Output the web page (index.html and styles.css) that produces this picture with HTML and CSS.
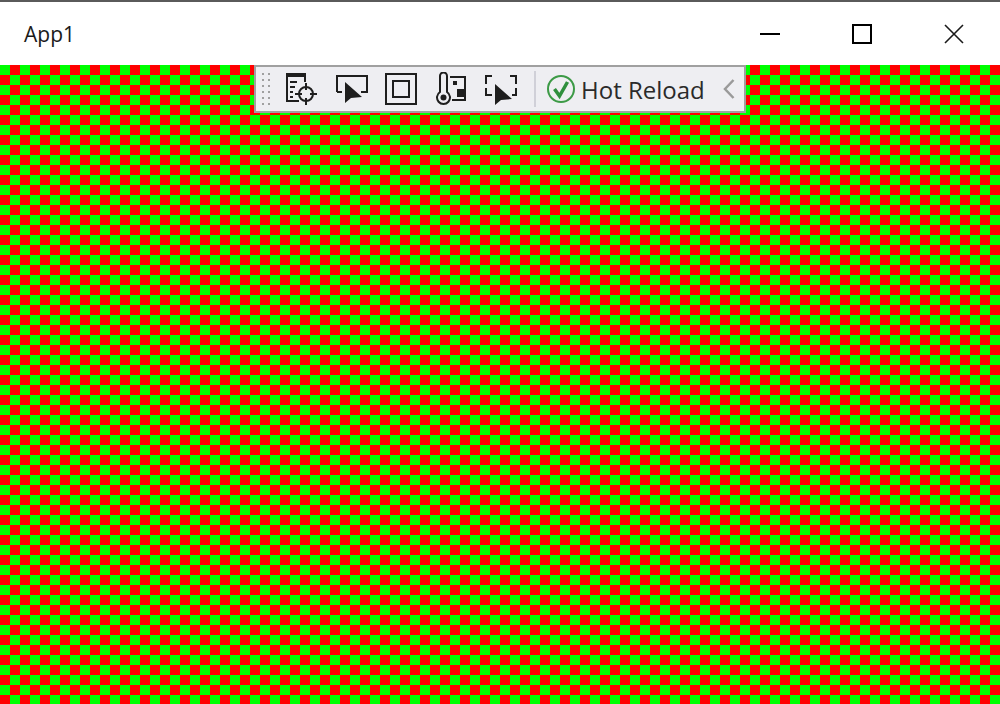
FILE: index.html
```html
<!DOCTYPE html>
<html lang="en">
<head>
<meta charset="utf-8">
<title>App1</title>
<link rel="stylesheet" href="styles.css">
</head>
<body>
<div class="window">
  <header class="titlebar">
    <div class="app-title">App1</div>
    <div class="caption">
      <div class="caption-btn"><svg width="20" height="20" viewBox="0 0 20 20"><rect x="0" y="9" width="20" height="2" fill="#000"/></svg></div>
      <div class="caption-btn"><svg width="20" height="20" viewBox="0 0 20 20"><rect x="1" y="1" width="18" height="18" fill="none" stroke="#000" stroke-width="2"/></svg></div>
      <div class="caption-btn"><svg width="20" height="20" viewBox="0 0 20 20"><path d="M1 1L19 19M19 1L1 19" fill="none" stroke="#1a1a1a" stroke-width="1.6"/></svg></div>
    </div>
  </header>
  <main class="canvas">
    <div class="toolbar">
      <div class="grip"></div>
      <div class="tool">
        <svg width="34" height="34" viewBox="0 0 34 34">
          <path d="M2 1h20v4H2z" fill="#1e1e1e"/>
          <path d="M3 5v24h12M21 5v5" fill="none" stroke="#1e1e1e" stroke-width="2"/>
          <path d="M6 10h7M6 15h5M6 20h3M6 25h3" stroke="#1e1e1e" stroke-width="2" fill="none"/>
          <circle cx="22" cy="22" r="7" fill="none" stroke="#1e1e1e" stroke-width="2"/>
          <path d="M22 11v7M22 26v7M11 22h7M26 22h7" stroke="#1e1e1e" stroke-width="2" fill="none"/>
        </svg>
      </div>
      <div class="tool">
        <svg width="34" height="34" viewBox="0 0 34 34">
          <path d="M3 20V4h30v16h-6M3 20h5" fill="none" stroke="#1e1e1e" stroke-width="2"/>
          <path d="M11 10v21l6-5 11-1z" fill="#1e1e1e"/>
        </svg>
      </div>
      <div class="tool">
        <svg width="34" height="34" viewBox="0 0 34 34">
          <rect x="2" y="2" width="30" height="30" fill="none" stroke="#1e1e1e" stroke-width="2"/>
          <rect x="9" y="9" width="16" height="16" fill="none" stroke="#1e1e1e" stroke-width="2"/>
        </svg>
      </div>
      <div class="tool">
        <svg width="34" height="34" viewBox="0 0 34 34">
          <path d="M6 20V4a3.500 3.500 0 0 1 7 0v16a6.500 6.500 0 1 1-7 0z" fill="none" stroke="#1e1e1e" stroke-width="2"/>
          <circle cx="9.500" cy="25.500" r="3" fill="#1e1e1e"/>
          <path d="M16 5h15v23H18" fill="none" stroke="#1e1e1e" stroke-width="2"/>
          <rect x="19" y="9" width="4" height="4" fill="#1e1e1e"/>
          <rect x="23" y="17" width="8" height="8" fill="#1e1e1e"/>
        </svg>
      </div>
      <div class="tool">
        <svg width="34" height="34" viewBox="0 0 34 34">
          <path d="M8 4H2v8M26 4h6v8M2 16v7h6M32 16v7h-4M8 2v0" fill="none" stroke="#1e1e1e" stroke-width="2"/>
          <path d="M11 12v21l6-5 11-1z" fill="#1e1e1e"/>
        </svg>
      </div>
      <div class="separator"></div>
      <div class="status">
        <svg width="30" height="30" viewBox="0 0 30 30">
          <circle cx="15" cy="15" r="13" fill="none" stroke="#3c9a46" stroke-width="2"/>
          <path d="M8.500 15l5 7 8-14" fill="none" stroke="#2f8f3d" stroke-width="3.500"/>
        </svg>
        <span class="status-text">Hot Reload</span>
      </div>
      <div class="collapse">
        <svg width="12" height="20" viewBox="0 0 12 20"><path d="M10.500 1L2 10l8.500 9" fill="none" stroke="#9a9a9a" stroke-width="2.500"/></svg>
      </div>
    </div>
  </main>
</div>
</body>
</html>
```

FILE: styles.css
```css
* { box-sizing: border-box; }
html, body { margin: 0; height: 100%; }
body { font-family: "Open Sans", "Noto Sans", sans-serif; background: #fff; overflow: hidden; }
.window { display: flex; flex-direction: column; height: 704px; }
.titlebar {
  height: 65px;
  flex: none;
  display: flex;
  justify-content: space-between;
  align-items: center;
  background: #fff;
  border-top: 2px solid #5a5a5a;
}
.app-title { padding-left: 24px; font-size: 21px; color: #1a1a1a; }
.caption { display: flex; height: 100%; }
.caption-btn { width: 92px; display: flex; align-items: center; justify-content: center; }
.canvas {
  flex: 1;
  display: flex;
  justify-content: center;
  align-items: flex-start;
  background-color: #0f0;
  background-image: conic-gradient(#f00 25%, #0f0 0 50%, #f00 0 75%, #0f0 0);
  background-size: 20px 20px;
}
.toolbar {
  width: 492px;
  height: 48px;
  display: flex;
  align-items: center;
  background: #eeeef2;
  border: 2px solid #a0a0a0;
  border-top-width: 2px;
}
.grip {
  width: 12px;
  height: 36px;
  margin: 0 12px 0 4px;
  background-image: radial-gradient(circle, #a0a0a0 1px, transparent 1.500px);
  background-size: 6px 6px;
}
.tool { width: 50px; height: 44px; display: flex; align-items: center; justify-content: flex-start; }
.separator { width: 2px; height: 36px; background: #d0d0d8; margin: 0 10px 0 0; }
.status { display: flex; align-items: center; gap: 5px; }
.status-text { font-size: 24px; color: #2a2a2a; }
.collapse { margin-left: auto; width: 30px; display: flex; align-items: center; justify-content: center; }
```
